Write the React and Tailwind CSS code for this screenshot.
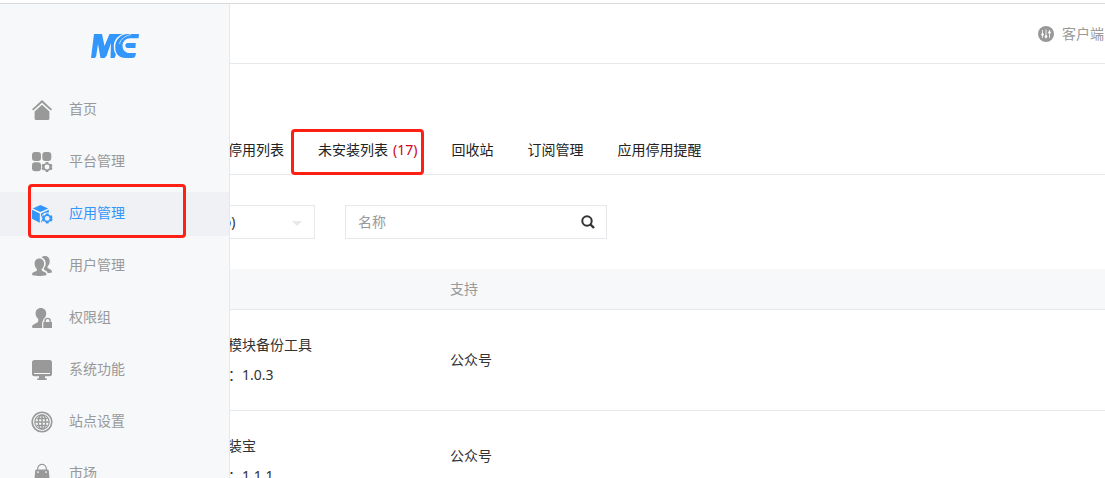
const Gear = ({ cx, cy, hole }) => (
  <g>
    <path
      transform={`translate(${cx} ${cy})`}
      d="M-1.2-5h2.4l.5 1.4 1.2.7 1.4-.3 1.2 2-.9 1.1v.2l.9 1.1-1.2 2-1.4-.3-1.2.7-.5 1.4h-2.4l-.5-1.4-1.2-.7-1.4.3-1.2-2 .9-1.1v-.2l-.9-1.1 1.2-2 1.4.3 1.2-.7z"
    />
    <circle cx={cx} cy={cy} r="2.4" className={hole} />
  </g>
);

const icons = {
  home: (
    <>
      <path d="M10 0 20 9.2l-1.2 1.4L10 2.7l-8.800 7.900L0 9.2z" />
      <path d="M10 4.7 17.4 11.4V18.5a1.5 1.5 0 0 1-1.5 1.5H4.1a1.5 1.5 0 0 1-1.5-1.5V11.4z" />
    </>
  ),
  platform: (
    <>
      <rect x="0" y="0" width="9" height="9" rx="3" />
      <rect x="10.3" y="0" width="9" height="9" rx="3" />
      <rect x="0" y="10.3" width="9" height="9" rx="3" />
      <Gear cx={15} cy={15} hole="fill-[#f6f8fa]" />
    </>
  ),
  apps: (
    <>
      <path d="M8.4 1 16.2 4.4 8.4 8.1.7 4.4z" />
      <path d="M0 5.8 7.8 9.5V18.800L0 14.8z" />
      <path d="M9 9.5 16.8 5.8V8.8A6 6 0 0 0 10 17.8L9 18.8z" />
      <Gear cx={15.2} cy={14.4} hole="fill-[#f0f1f5]" />
    </>
  ),
  users: (
    <>
      <path d="M13 0c2.900 0 4.700 2.200 4.700 5.200 0 2.300-.9 4.200-2.200 5.200v1.200c0 1.400 4.500 1.500 4.500 4.300 0 .6-1.600.9-4.300 1-.6-2-3.300-2.600-3.800-3.300v-1.500c1.200-1.300 1.800-3 1.800-4.900 0-2.700-1.500-5-4-5.800C10.500.5 11.700 0 13 0z" />
      <path d="M7.300 2.600c2.900 0 4.800 2.200 4.800 5.100 0 2.200-.9 4.100-2.300 5.200v1.300c0 1.400 4.700 1.300 4.700 4.300 0 1-3 1.400-7.200 1.400S0 19.500 0 18.500c0-3 4.900-2.900 4.900-4.300v-1.300C3.500 11.800 2.600 9.900 2.600 7.700c0-2.900 1.800-5.100 4.700-5.100z" />
    </>
  ),
  group: (
    <>
      <path d="M8.900 0c3.200 0 5.300 2.300 5.300 5.400 0 1.700-.6 3.200-1.500 4.400-1.400 1-1.700 2.400-1.700 3.500-.7.200-.9.700-.9 1.500V20H2C.7 20 0 19.600 0 18.800c0-3.300 6.200-3.400 6.200-5.600v-2.400C4.500 9.600 3.600 7.600 3.600 5.400 3.600 2.300 5.700 0 8.900 0z" />
      <path
        fillRule="evenodd"
        d="M11.300 14h1V13a3.300 3.300 0 0 1 6.600 0v1H20v6h-8.700zM13.700 14h3.800V13a1.900 1.900 0 0 0-3.800 0z"
      />
    </>
  ),
  system: (
    <>
      <path
        fillRule="evenodd"
        d="M2.500 0h15A2.500 2.500 0 0 1 20 2.500v11.200a2.500 2.500 0 0 1-2.500 2.500h-15A2.500 2.500 0 0 1 0 13.700V2.500A2.500 2.500 0 0 1 2.500 0zM2 13v1h16v-1z"
      />
      <path d="M7 16h6v2.300h1.700V20H5.300v-1.700H7z" />
    </>
  ),
  site: (
    <g fill="none" stroke="currentColor">
      <circle cx="10" cy="10" r="9.8" strokeWidth="1.6" />
      <circle cx="10" cy="10" r="7.2" strokeWidth="1.2" />
      <ellipse cx="10" cy="10" rx="3.7" ry="7.2" strokeWidth="1.3" />
      <path d="M10 3v14M3 10h14M4.500 6.500h11M4.500 13.500h11" strokeWidth="1.5" />
    </g>
  ),
  market: (
    <>
      <path d="M5.700 7V4.700a4.300 4.300 0 0 1 8.600 0V7" fill="none" stroke="currentColor" strokeWidth="1.200" />
      <path
        fillRule="evenodd"
        d="M4.700 5.500h10.600a1.500 1.500 0 0 1 1.500 1.300L18 20H2L3.200 6.800a1.500 1.500 0 0 1 1.500-1.300zM6 7.200a.9.9 0 1 0 0 1.800.9.9 0 0 0 0-1.800zM14 7.200a.9.9 0 1 0 0 1.800.9.9 0 0 0 0-1.800z"
      />
    </>
  ),
};

const menu = [
  { label: "首页", icon: "home" },
  { label: "平台管理", icon: "platform" },
  { label: "应用管理", icon: "apps", active: true },
  { label: "用户管理", icon: "users" },
  { label: "权限组", icon: "group" },
  { label: "系统功能", icon: "system" },
  { label: "站点设置", icon: "site" },
  { label: "市场", icon: "market" },
];

const tabs = [
  { label: "停用列表" },
  { label: "未安装列表", count: 17, active: true },
  { label: "回收站" },
  { label: "订阅管理" },
  { label: "应用停用提醒" },
];

const apps = [
  { name: "模块备份工具", version: "1.0.3", support: "公众号", pad: "pb-5" },
  { name: "装宝", version: "1.1.1", support: "公众号", pad: "pb-2.5" },
];

function Logo() {
  return (
    <svg viewBox="0 0 48 24" className="h-6 w-12 fill-[#3296fa]" role="img" aria-label="ME">
      <path d="M3 0H11L13.500 12 18.500 0H32C26 2 23 6.500 22.800 12 22.700 16 23.500 18.500 25 20.500L23.500 24H19.500L20 9 15.500 22 13.500 24H9.500L7 10 5.200 22 4 24H0z" />
      <path d="M48 0 47.500 4.300H39C35 4.300 31.500 7.400 31.500 11.700S34.500 19 38.500 19H45L44.500 21.500C44 23.300 43 24 41 24H34.500C28 24 24.200 19.500 24.200 13.200 24.200 6 29.500 0 37 0z" />
      <path d="M36.500 9H44.800L44.400 14H36.500C33.500 13.500 33.500 9.500 36.500 9z" />
      <path d="M40 .5C34 2 29.500 5 28.500 10" className="fill-none stroke-[#f6f8fa]" strokeWidth="0.7" />
    </svg>
  );
}

function Sidebar() {
  return (
    <aside className="relative z-10 w-[230px] flex-none border-r border-[#e7e8eb] bg-[#f6f8fa] pt-[30px]">
      <div className="flex justify-center">
        <Logo />
      </div>
      <nav className="mt-[30px] space-y-2">
        {menu.map((item) => (
          <a
            key={item.label}
            href="#"
            className={`relative flex h-11 items-center pl-8 ${
              item.active ? "bg-[#f0f1f5] text-[#3296fa]" : "text-[#999]"
            }`}
          >
            <svg viewBox="0 0 20 20" className="h-5 w-5 overflow-visible" fill="currentColor">
              {icons[item.icon]}
            </svg>
            <span className="ml-[17px] pb-0.5">{item.label}</span>
            {item.active && (
              <span className="absolute -top-2 left-7 h-[54px] w-[158px] rounded-sm border-3 border-[#ff2015]" />
            )}
          </a>
        ))}
      </nav>
    </aside>
  );
}

function Header() {
  return (
    <header className="flex h-[60px] items-center justify-end border-b border-[#e7e8eb] pr-px">
      <a href="#" className="flex items-center gap-2 text-[#999]">
        <svg viewBox="0 0 16 16" className="h-4 w-4">
          <circle cx="8" cy="8" r="8" fill="currentColor" />
          <g stroke="#fff" strokeWidth="0.8" fill="#fff">
            <path d="M4.500 4v8M8 3.500v9M11.500 4v8" />
            <circle cx="4.500" cy="8.500" r="1" />
            <circle cx="8" cy="10.500" r="1" />
            <circle cx="11.500" cy="6.500" r="1" />
          </g>
        </svg>
        客户端
      </a>
    </header>
  );
}

function Tabs() {
  return (
    <nav className="mt-16 flex h-[47px] gap-[34px] border-b border-[#e7e8eb] pl-7 text-[#222]">
      {tabs.map((tab) => (
        <a
          key={tab.label}
          href="#"
          className={`relative flex items-center gap-[5px] whitespace-nowrap border-b-2 ${
            tab.active ? "border-[#428bca]" : "border-transparent"
          }`}
        >
          {tab.label}
          {tab.count && <span className="text-[#d0021b]">({tab.count})</span>}
          {tab.active && (
            <span className="absolute top-px -right-[7px] -bottom-[3px] -left-[27px] rounded-sm border-3 border-[#ff2015]" />
          )}
        </a>
      ))}
    </nav>
  );
}

function Filters() {
  return (
    <form className="mt-[30px] flex gap-[30px]">
      <div className="relative">
        <select
          aria-label="支持"
          className="h-[34px] w-[115px] appearance-none border border-[#e7e8eb] bg-white pl-[18px] text-[#333]"
        >
          <option>(6)</option>
        </select>
        <span className="pointer-events-none absolute top-4 right-[13px] border-x-5 border-t-5 border-x-transparent border-t-[#e7e8eb]" />
      </div>
      <div className="flex h-[34px] w-[262px] items-center border border-[#e7e8eb] pr-[11px]">
        <input
          type="text"
          aria-label="名称"
          placeholder="名称"
          className="min-w-0 flex-1 pl-3 outline-none placeholder:text-[#999]"
        />
        <button type="button" aria-label="搜索" className="text-[#333]">
          <svg viewBox="0 0 14 14" className="h-3.5 w-3.5" fill="none" stroke="currentColor">
            <circle cx="6" cy="6" r="4.7" strokeWidth="2" />
            <path d="M9.500 9.500 13 13" strokeWidth="2.400" />
          </svg>
        </button>
      </div>
    </form>
  );
}

function AppTable() {
  return (
    <table className="mt-[30px] w-full border-separate border-spacing-0 text-[#333]">
      <thead className="bg-[#f6f8fa] text-[#999]">
        <tr className="h-[41px] text-left">
          <th className="w-[250px] border-b border-[#e7e8eb]" />
          <th className="border-b border-[#e7e8eb] font-normal">支持</th>
        </tr>
      </thead>
      <tbody>
        {apps.map((app) => (
          <tr key={app.name}>
            <td className={`border-b border-[#e7e8eb] pt-5 pl-7 leading-[30px] ${app.pad}`}>
              <div>{app.name}</div>
              <div>：{app.version}</div>
            </td>
            <td className="border-b border-[#e7e8eb]">{app.support}</td>
          </tr>
        ))}
      </tbody>
    </table>
  );
}

export default function App() {
  return (
    <div className="flex h-screen flex-col overflow-hidden bg-white pt-[3px] font-['Noto_Sans','Noto_Sans_CJK_SC',sans-serif] text-sm">
      <div className="flex min-h-0 flex-1 border-t border-[#d9d9d9]">
        <Sidebar />
        {/* the content runs on under the open sidebar */}
        <main className="-ml-[30px] min-w-0 flex-1">
          <Header />
          <Tabs />
          <Filters />
          <AppTable />
        </main>
      </div>
    </div>
  );
}
